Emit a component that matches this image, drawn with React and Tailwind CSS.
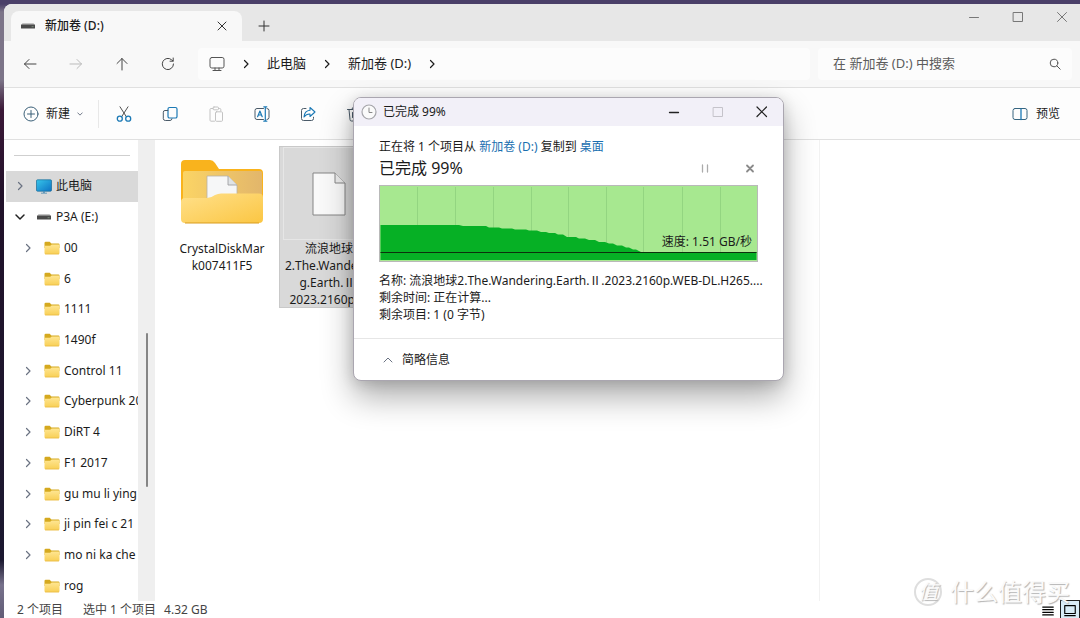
import React, { useState } from 'react';

const folders = [
  { name: '00', expandable: true },
  { name: '6', expandable: false },
  { name: '1111', expandable: false },
  { name: '1490f', expandable: false },
  { name: 'Control 11', expandable: true },
  { name: 'Cyberpunk 20', expandable: true },
  { name: 'DiRT 4', expandable: true },
  { name: 'F1 2017', expandable: true },
  { name: 'gu mu li ying', expandable: true },
  { name: 'ji pin fei c 21', expandable: true },
  { name: 'mo ni ka che', expandable: true },
  { name: 'rog', expandable: false },
];

const Icon = ({ className = 'w-4 h-4', children }) => (
  <svg
    viewBox="0 0 16 16"
    fill="none"
    stroke="currentColor"
    strokeLinecap="round"
    strokeLinejoin="round"
    className={`shrink-0 ${className}`}
    aria-hidden="true"
  >
    {children}
  </svg>
);

const Chevron = ({ className }) => (
  <Icon className={className}>
    <path d="M6.500 4.500L10 8l-3.500 3.500" strokeWidth="1.200" />
  </Icon>
);

const DriveIcon = () => (
  <svg viewBox="0 0 14 6" className="w-[14px] h-[6px] shrink-0" aria-hidden="true">
    <path d="M1.500 0h11l1.300 2H.2z" fill="#c4c4c4" />
    <rect y="1.600" width="14" height="4" rx=".5" fill="#4a4a4a" />
    <rect x="10.600" y="3.200" width="2" height="1" fill="#7a8a7a" />
  </svg>
);

const FolderIcon = () => (
  <svg viewBox="0 0 16 14" className="w-4 h-[14px] shrink-0" aria-hidden="true">
    <defs>
      <linearGradient id="smallFolder" x1="0" y1="0" x2="0" y2="1">
        <stop offset="0" stopColor="#ffe692" />
        <stop offset="1" stopColor="#f8cf55" />
      </linearGradient>
    </defs>
    <path d="M.5 2A1.200 1.200 0 0 1 1.700.8h4L7.400 2.500h7A1.200 1.200 0 0 1 15.500 3.700V7H.5z" fill="#d5a91f" />
    <path d="M.5 4.800h5.700L7.700 3.400h6.800a1 1 0 0 1 1 1v7.600a1.200 1.200 0 0 1-1.200 1.200H1.700A1.200 1.200 0 0 1 .5 12z" fill="url(#smallFolder)" />
    <path d="M1 13h14" stroke="#e6b53c" strokeWidth=".6" />
  </svg>
);

const PcIcon = () => (
  <svg viewBox="0 0 16 15" className="w-4 h-[15px] shrink-0" aria-hidden="true">
    <defs>
      <linearGradient id="pcScreen" x1="0" y1="0" x2="1" y2="1">
        <stop offset="0" stopColor="#37c6ea" />
        <stop offset="1" stopColor="#0d72c4" />
      </linearGradient>
    </defs>
    <rect x=".5" y=".8" width="15" height="11.400" rx="1" fill="url(#pcScreen)" stroke="#1a6a96" strokeWidth=".7" />
    <path d="M7 12.500h2v1.200H7z" fill="#3d85b5" />
    <path d="M5 14.200h6" stroke="#6b9cb8" />
  </svg>
);

const LargeFolder = () => (
  <svg viewBox="0 0 82 66" className="w-[82px] h-[66px]" aria-hidden="true">
    <defs>
      <linearGradient id="folderFront" x1="0" y1="0" x2="1" y2="1">
        <stop offset="0" stopColor="#ffe08a" />
        <stop offset="1" stopColor="#fbc643" />
      </linearGradient>
      <linearGradient id="folderInside" x1="0" y1="0" x2="1" y2="0">
        <stop offset="0" stopColor="#fbd465" />
        <stop offset="1" stopColor="#e2b66b" />
      </linearGradient>
    </defs>
    <path d="M0 6a4 4 0 0 1 4-4h25q3 0 5 3l4 6h40a4 4 0 0 1 4 4V52H0z" fill="#f9b31d" />
    <path d="M2 15a2 2 0 0 1 2-2h75a2 2 0 0 1 2 2v30H2z" fill="url(#folderInside)" />
    <path d="M26 18h21l9 9v20H26z" fill="#f6f7f8" stroke="#b9b3a6" strokeWidth=".8" />
    <path d="M47 18v9h9" fill="#dfe3e6" stroke="#98989a" strokeWidth=".8" />
    <path d="M0 44a4 4 0 0 1 4-4h22q4 0 8-3 3-1.500 6-1.500h38a4 4 0 0 1 4 4V61a4 4 0 0 1-4 4H4a4 4 0 0 1-4-4z" fill="url(#folderFront)" />
    <path d="M4 65h74" stroke="#d99c1e" strokeWidth="1" />
  </svg>
);

const FileIcon = () => (
  <svg viewBox="0 0 34 44" className="w-[34px] h-[44px]" aria-hidden="true">
    <path d="M1 1h22l10 10v32H1z" fill="#f9f9f9" stroke="#858585" />
    <path d="M23 1v10h10" fill="#ececec" stroke="#858585" />
  </svg>
);

const Toolbar = () => (
  <div className="h-[53px] shrink-0 flex items-center bg-[#fdfdfd] border-y border-[#e0e0e0] pl-[19px] pr-5 text-[#4a5a68]">
    <button className="flex items-center gap-[7px] text-[#1b1b1b]">
      <Icon className="w-4 h-4 text-[#3b6078]">
        <circle cx="8" cy="8" r="7" />
        <path d="M8 4.500v7M4.500 8h7" />
      </Icon>
      新建
      <Icon className="w-[6px] h-[6px] text-gray-500">
        <path d="M2 5l6 6 6-6" strokeWidth="2.500" />
      </Icon>
    </button>
    <div className="w-px h-7 ml-[15px] mr-[17px] bg-[#e8e8e8]" />
    <div className="flex items-center gap-[30px]">
      <button aria-label="剪切">
        <Icon>
          <path d="M4 .8l6.400 10M12 .8L5.600 10.800" stroke="#505050" />
          <circle cx="3.800" cy="12.700" r="2.500" stroke="#1b79b5" strokeWidth="1.300" />
          <circle cx="12.200" cy="12.700" r="2.500" stroke="#1b79b5" strokeWidth="1.300" />
        </Icon>
      </button>
      <button aria-label="复制">
        <Icon>
          <rect x="6" y="1.500" width="9" height="10.500" rx="1.600" stroke="#1b79b5" strokeWidth="1.200" />
          <path d="M5.800 4.500H3a1.700 1.700 0 0 0-1.700 1.700v6.500A2 2 0 0 0 3.300 14.500h4.700a2 2 0 0 0 2-1.700" />
        </Icon>
      </button>
      <button aria-label="粘贴" className="text-[#c3c3c3]">
        <Icon>
          <path d="M5 2.500H3a1 1 0 0 0-1 1v10.700a1 1 0 0 0 1 1h3.500M10.500 2.500h1.300a1 1 0 0 1 1 1v1.300" />
          <rect x="5" y="1" width="5.500" height="2.800" rx="1" />
          <rect x="7.500" y="5.800" width="7" height="9.500" rx="1" />
        </Icon>
      </button>
      <button aria-label="重命名">
        <Icon>
          <path d="M9.500 2.500H3A2 2 0 0 0 1 4.500v7a2 2 0 0 0 2 2h6.500M13 2.500a2 2 0 0 1 2 2v7a2 2 0 0 1-2 2" />
          <path d="M11.300 1v14M9.800.8h3M9.800 15.200h3M3.600 10.700L5.900 5l2.300 5.700M4.400 9h3" stroke="#1b79b5" strokeWidth="1.200" />
        </Icon>
      </button>
      <button aria-label="共享">
        <Icon>
          <path d="M6 2.500H3.500a2 2 0 0 0-2 2v8a2 2 0 0 0 2 2h8a2 2 0 0 0 2-2v-1.300" />
          <path d="M10 1.500l5 4.500-5 4.500V8C7 7.800 5.500 9 4 11c.3-4 2.500-6.500 6-6.800z" stroke="#1b79b5" strokeWidth="1.100" />
        </Icon>
      </button>
      <button aria-label="删除">
        <Icon>
          <path d="M1.500 3.500h13M6 3.200a2 2 0 0 1 4 0M3 3.500l1 10a1.500 1.500 0 0 0 1.500 1.500h5a1.500 1.500 0 0 0 1.500-1.500l1-10M6.500 6.500v5M9.500 6.500v5" />
        </Icon>
      </button>
    </div>
    <button className="ml-auto flex items-center gap-2 text-[#1b1b1b]">
      <Icon className="w-4 h-4 text-[#376580]">
        <rect x="1" y="2.500" width="14" height="11" rx="2" />
        <path d="M9 3v10.500" stroke="#1b79b5" strokeWidth="1.300" />
      </Icon>
      预览
    </button>
  </div>
);

const Sidebar = () => (
  <div className="w-[151px] shrink-0 flex">
    <nav className="w-[134px] flex flex-col overflow-hidden">
      <div className="h-[31px] shrink-0 pt-[15px] pl-[10px] pr-2">
        <div className="h-px bg-[#cfcfcf]" />
      </div>
      <a href="#pc" className="flex-1 flex items-center ml-[2px] pl-[6px] bg-[#d9d9d9]">
        <Chevron className="w-4 h-4 text-gray-500" />
        <span className="ml-2 mr-1 flex"><PcIcon /></span>
        此电脑
      </a>
      <a href="#e" className="flex-1 flex items-center pl-2">
        <Icon className="w-4 h-4 text-[#222]">
          <path d="M4 6l4 4 4-4" strokeWidth="1.500" />
        </Icon>
        <span className="ml-[9px] mr-[5px] flex"><DriveIcon /></span>
        P3A (E:)
      </a>
      {folders.map((folder) => (
        <a href="#folder" key={folder.name} className="flex-1 flex items-center pl-4 whitespace-nowrap">
          <span className="w-6 shrink-0">
            {folder.expandable && <Chevron className="w-4 h-4 text-gray-500" />}
          </span>
          <FolderIcon />
          <span className="ml-1">{folder.name}</span>
        </a>
      ))}
    </nav>
    {/* Scrollbar */}
    <div className="w-[17px] bg-[#efefef] pt-[193px] flex justify-center">
      <div className="w-[2px] h-[154px] rounded bg-[#858585]" />
    </div>
  </div>
);

const CopyDialog = ({ onClose }) => (
  <div
    role="dialog"
    aria-label="已完成 99%"
    className="absolute left-[353px] top-[97px] w-[431px] rounded-lg border border-[#aaa6b0] bg-white overflow-hidden shadow-[0_16px_32px_rgba(0,0,0,0.32),0_2px_14px_rgba(0,0,0,0.14)]"
  >
    <div className="h-7 flex items-center pl-[7px] pr-[13px] bg-[#f2f0f8]">
      <Icon className="w-4 h-4 text-[#a5a5aa]">
        <circle cx="8" cy="8" r="7" fill="#fafafa" strokeWidth="1.200" />
        <path d="M8 4v4.500h3" stroke="#888" />
      </Icon>
      <span className="ml-[6px]">已完成 99%</span>
      <div className="ml-auto flex items-center gap-7 text-[#222]">
        <button aria-label="最小化">
          <Icon><path d="M3.500 8.500h9" strokeWidth="1.300" /></Icon>
        </button>
        <button aria-label="最大化" disabled className="text-[#c5c3ca]">
          <Icon><rect x="3.500" y="3.500" width="9" height="9" /></Icon>
        </button>
        <button aria-label="关闭" onClick={onClose}>
          <Icon><path d="M3 3l9.500 9.500M12.500 3L3 12.500" strokeWidth="1.200" /></Icon>
        </button>
      </div>
    </div>

    <div className="px-[25px] pt-[13px] pb-[15px]">
      <p className="leading-4">
        正在将 1 个项目从 <a href="#d" className="text-[#1a6fb0]">新加卷 (D:)</a> 复制到{' '}
        <a href="#desktop" className="text-[#1a6fb0]">桌面</a>
      </p>
      <div className="h-[26px] flex items-center">
        <span className="text-base leading-6">已完成 99%</span>
        <div className="ml-auto flex items-center gap-[29px] text-[#ababab]">
          <button aria-label="暂停">
            <Icon><path d="M5.500 5v7M10.500 5v7" strokeWidth="1.300" /></Icon>
          </button>
          <button aria-label="取消">
            <Icon><path d="M5 5.500l6 6M11 5.500l-6 6" strokeWidth="1.800" stroke="#8a8a8a" /></Icon>
          </button>
        </div>
      </div>

      {/* Transfer speed graph */}
      <div className="relative mt-1">
        <svg viewBox="0 0 379 77" className="block w-full h-[77px]" preserveAspectRatio="none" aria-hidden="true">
          <rect x=".5" y=".5" width="378" height="76" fill="#a7e890" stroke="#b9b9b9" />
          {[38, 76, 114, 152, 189, 227, 264, 303, 341].map((x) => (
            <path key={x} d={`M${x + 0.5} 2v72`} stroke="#93d581" />
          ))}
          <path
            d="M1.500 40H80L84 41H107L110 42.500H120L123 43.500H133L136 44.500H147L150 45.500H158L162 47H167L170 48H176L179 49.500H184L188 52H197L200 53.500H206L210 55H216L220 57H226L230 58.500H234L238 60.500H243L247 62.500H250L254 64.500H257L262 67H377.500V75H1.500z"
            fill="#06b025"
          />
          <path d="M1.500 67.500h376" stroke="#0c300c" />
        </svg>
        <span className="absolute right-[6px] bottom-3 leading-4">速度: 1.51 GB/秒</span>
      </div>

      <div className="mt-[10px] leading-[17px]">
        <p className="whitespace-nowrap">名称: 流浪地球2.The.Wandering.Earth.Ⅱ.2023.2160p.WEB-DL.H265....</p>
        <p>剩余时间: 正在计算...</p>
        <p>剩余项目: 1 (0 字节)</p>
      </div>
    </div>

    <div className="h-[42px] flex items-center border-t border-[#e6e6e6] pl-[26px]">
      <button className="flex items-center gap-[6px]">
        <Icon className="w-4 h-4 text-gray-500">
          <path d="M4 10l4-4 4 4" />
        </Icon>
        简略信息
      </button>
    </div>
  </div>
);

const App = () => {
  const [dialogOpen, setDialogOpen] = useState(true);
  const [search, setSearch] = useState('');

  return (
    <div className="relative h-screen overflow-hidden pl-1 pt-1 text-xs text-[#1b1b1b] bg-[linear-gradient(to_bottom,#4a3f68_0px,#4a3f68_4px,#7c7488_12px,#7c7488_80px,#3b1837_110px,#21122a_200px,#1b1830_560px,#77728c_585px,#615c76_618px)] font-['Noto_Sans','Noto_Sans_CJK_SC',sans-serif]">
      <div className="h-full flex flex-col rounded-tl-lg bg-white overflow-hidden">
        {/* Tab strip */}
        <div className="h-[37px] shrink-0 flex items-end bg-[#e7e7e7]">
          <div className="w-[231px] h-[30px] ml-[7px] pl-[10px] pr-3 flex items-center rounded-t-lg bg-[#f8f8f8]">
            <DriveIcon />
            <span className="ml-[10px] font-medium">新加卷 (D:)</span>
            <button aria-label="关闭标签页" className="ml-auto text-[#333]">
              <Icon><path d="M4 4l8 8M12 4l-8 8" /></Icon>
            </button>
          </div>
          <button aria-label="新建标签页" className="ml-[14px] mb-[7px] text-[#333]">
            <Icon><path d="M8 3v10M3 8h10" /></Icon>
          </button>
          <div className="ml-auto mr-[10px] self-start pt-[5px] flex gap-7 text-[#777]">
            <button aria-label="最小化">
              <Icon><path d="M3.500 8.500h9" /></Icon>
            </button>
            <button aria-label="最大化">
              <Icon><rect x="3.500" y="3.500" width="9" height="9" /></Icon>
            </button>
            <button aria-label="关闭">
              <Icon><path d="M3.500 3.500l9 9M12.500 3.500l-9 9" /></Icon>
            </button>
          </div>
        </div>

        {/* Address bar */}
        <div className="h-[46px] shrink-0 flex items-center bg-[#f8f8f8] pl-[18px] pr-2">
          <div className="flex items-center gap-[30px] text-[#444]">
            <button aria-label="后退">
              <Icon><path d="M14 8H2.500M7 3.500L2.500 8 7 12.500" /></Icon>
            </button>
            <button aria-label="前进" className="text-[#bbb]">
              <Icon><path d="M2 8h11.500M9 3.500l4.500 4.500L9 12.500" /></Icon>
            </button>
            <button aria-label="向上">
              <Icon><path d="M8 14V2.500M3 7.500l5-5 5 5" /></Icon>
            </button>
            <button aria-label="刷新">
              <Icon><path d="M13.500 8A5.600 5.600 0 1 1 11.600 3.800L13 5M13.200 2v3.200H10" /></Icon>
            </button>
          </div>
          <div className="flex-1 h-8 ml-[22px] mr-2 pl-[11px] flex items-center rounded bg-[#fcfcfc]">
            <Icon className="w-4 h-4 text-[#555]">
              <rect x="1" y="1.500" width="14" height="10.500" rx="1.800" />
              <path d="M6 12v2.500M10 12v2.500M4 14.500h8" />
            </Icon>
            <Chevron className="w-4 h-4 mx-[13px]" />
            <button className="text-[13px]">此电脑</button>
            <Chevron className="w-4 h-4 mx-[13px]" />
            <button className="text-[13px]">新加卷 (D:)</button>
            <Chevron className="w-4 h-4 mx-[13px]" />
          </div>
          <div className="w-[254px] h-8 pl-[15px] pr-[9px] flex items-center rounded bg-[#fcfcfc]">
            <input
              type="text"
              aria-label="搜索"
              value={search}
              onChange={(e) => setSearch(e.target.value)}
              placeholder="在 新加卷 (D:) 中搜索"
              className="flex-1 min-w-0 text-[13px] outline-none placeholder:text-[#5c5c5c]"
            />
            <Icon className="w-4 h-4 text-[#555]">
              <circle cx="7" cy="7" r="3.800" />
              <path d="M9.800 9.800l3.400 3.400" />
            </Icon>
          </div>
        </div>

        <Toolbar />

        <div className="flex-1 min-h-0 flex">
          <Sidebar />
          <main className="flex-1 flex items-start gap-[9px] pl-[19px] pt-[6px] leading-[17px] text-center">
            <div className="w-24 pt-3 flex flex-col items-center">
              <LargeFolder />
              <p className="pt-4">CrystalDiskMar<br />k007411F5</p>
            </div>
            <div className="w-[100px] h-[162px] flex flex-col items-center border border-[#c9c9c9] bg-[#d9d9d9]">
              <div className="w-[92px] h-[93px] shrink-0 flex items-center justify-center border border-[#e6e6e6]">
                <FileIcon />
              </div>
              <p className="whitespace-nowrap">流浪地球<br />2.The.Wanderin<br />g.Earth.Ⅱ.<br />2023.2160p.W</p>
            </div>
          </main>
          <aside className="w-[261px] shrink-0 border-l border-[#f2f2f2]" />
        </div>

        {/* Status bar */}
        <div className="h-[17px] shrink-0 flex items-center pl-[13px] text-[#444]">
          <span>2 个项目</span>
          <span className="ml-5">选中 1 个项目</span>
          <span className="ml-2">4.32 GB</span>
          <div className="ml-auto flex items-end gap-[5px] text-black">
            <button aria-label="详细信息" className="pb-[2px]">
              <Icon className="w-[14px] h-[14px]"><path d="M2 3.500h12M2 6.500h12M2 9.500h12M2 12.500h12" strokeWidth="1.400" /></Icon>
            </button>
            <button aria-label="大图标" className="w-5 h-5 border border-[#222] bg-[#d9ecf7] flex items-center justify-center">
              <Icon className="w-[14px] h-[14px]"><path d="M2 3h12v9H2zM2 14.500h12" strokeWidth="1.300" /></Icon>
            </button>
          </div>
        </div>
      </div>

      {dialogOpen && <CopyDialog onClose={() => setDialogOpen(false)} />}

      {/* Watermark */}
      <div className="absolute right-[10px] bottom-[10px] flex items-center gap-2 text-2xl leading-8 text-[#fafafa] text-shadow-[1px_1px_1px_#b4b4b4] pointer-events-none">
        <span className="w-7 h-7 flex items-center justify-center rounded-full border-2 border-[#dedede] text-xl italic">值</span>
        什么值得买
      </div>
    </div>
  );
};

export default App;
